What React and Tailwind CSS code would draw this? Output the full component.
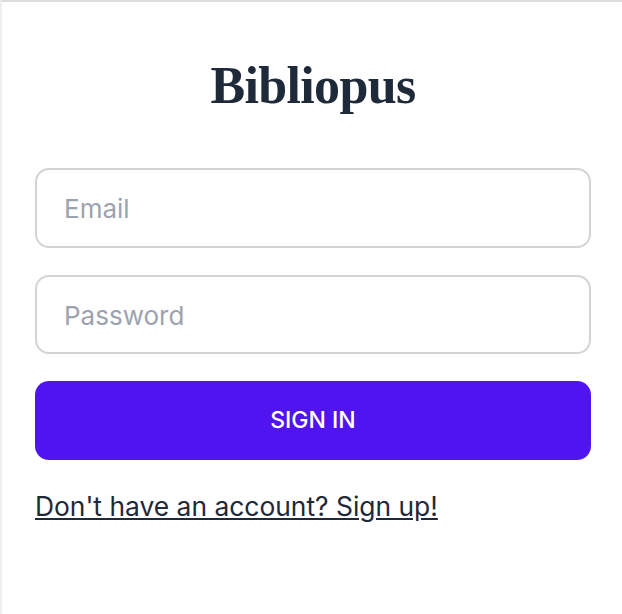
export default function App() {
  return (
    <div className="min-h-[614px] w-[622px] bg-white border-t-2 border-l-2 border-t-[#dcdcdc] border-l-[#efefef] font-['Inter',sans-serif]">
      <div className="px-[33px] pt-[54px]">
        <h1 className="pl-[2px] text-center text-[52px] leading-[60px] font-bold text-gray-800 font-['Liberation_Serif',serif] tracking-[-0.65px]">Bibliopus</h1>
        <form className="mt-[52px] flex w-[556px] flex-col gap-[27px]">
          <input placeholder="Email" className="h-[79.5px] rounded-[14px] border-2 border-[#d4d4d8] px-[27px] pt-[2px] text-[26px] outline-none placeholder:text-[#9ca3af]" />
          <input type="password" placeholder="Password" className="h-[79.5px] rounded-[14px] border-2 border-[#d4d4d8] px-[27px] pt-[2px] text-[26px] outline-none placeholder:text-[#9ca3af]" />
          <button type="button" className="h-[79px] rounded-[14px] bg-[#4f14ef] text-[23px] font-medium text-white">SIGN IN</button>
        </form>
        <a href="#" className="mt-[30px] inline-block text-[26.4px] leading-[32px] text-gray-800 underline">Don't have an account? Sign up!</a>
      </div>
    </div>
  );
}
